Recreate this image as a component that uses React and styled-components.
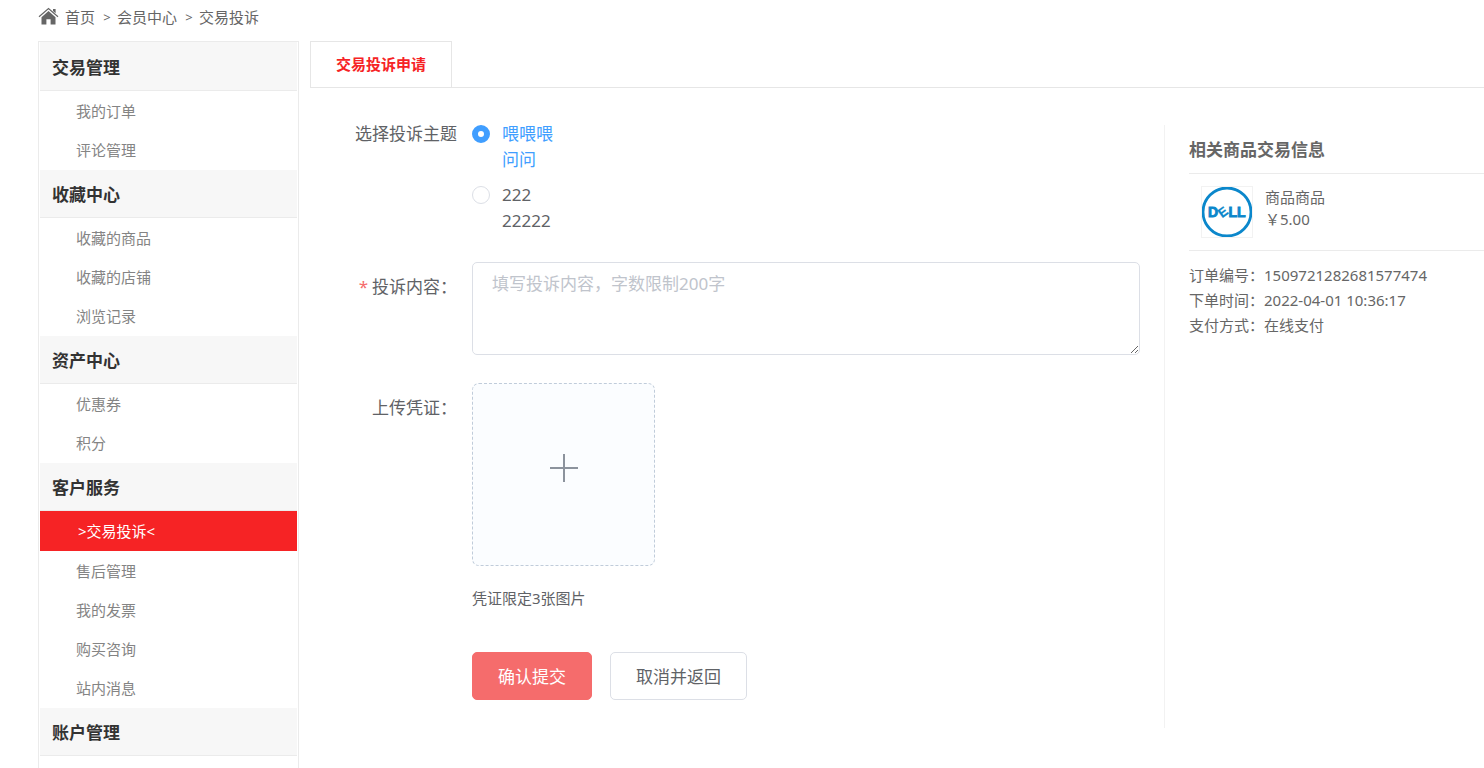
import React, { useState } from "react";
import styled, { createGlobalStyle } from "styled-components";

const GlobalStyle = createGlobalStyle`
  * {
    box-sizing: border-box;
  }

  body {
    margin: 0;
    background: white;
    color: #606266;
    font-family: "Noto Sans", "Noto Sans CJK SC", sans-serif;
    font-size: 17px;
  }

  button,
  input,
  textarea {
    font-family: inherit;
    font-size: inherit;
  }

  a {
    color: inherit;
    text-decoration: none;
  }
`;

const Page = styled.div`
  display: flex;
  flex-direction: column;
  min-height: 100vh;
  padding-left: 38px;
`;

const Breadcrumb = styled.nav`
  display: flex;
  align-items: center;
  height: 33px;
  margin-bottom: 8px;
  font-size: 15px;
  color: #666;
`;

const HomeIcon = styled.svg`
  width: 21px;
  height: 20px;
  margin-right: 6px;
`;

const Separator = styled.span`
  width: 22px;
  padding-left: 2px;
  text-align: center;
  font-size: 13px;
`;

const Body = styled.div`
  display: flex;
  flex: 1;
  gap: 11px;
`;

const Sidebar = styled.aside`
  width: 261px;
  flex-shrink: 0;
  border: 1px solid #ebebeb;
  border-width: 1px 1px 0;
  padding: 0 1px;
`;

const GroupTitle = styled.h2`
  display: flex;
  align-items: center;
  height: ${(props) => (props.$first ? "49px" : "48px")};
  margin: 0;
  padding-left: 12px;
  border-bottom: 1px solid #ebebeb;
  background: #f7f7f7;
  color: #333;
  font-size: 17px;
`;

const Menu = styled.div`
  display: grid;
  padding-bottom: 1px;
`;

const MenuLink = styled.a`
  height: ${(props) => (props.$active ? "40px" : "39px")};
  line-height: 40px;
  padding-left: ${(props) => (props.$active ? "38px" : "36px")};
  background: ${(props) => (props.$active ? "#f62325" : "white")};
  color: ${(props) => (props.$active ? "white" : "#848484")};
  font-size: 15px;
`;

const Main = styled.main`
  flex: 1;
  min-width: 0;
`;

const Tabs = styled.div`
  display: flex;
  border-bottom: 1px solid #e6e6e6;
`;

const Tab = styled.button`
  height: 46px;
  padding: 0 25px 2px;
  border: 1px solid #e6e6e6;
  border-bottom: none;
  background: white;
  color: #f62325;
  font-size: 15px;
  font-weight: bold;
`;

const Content = styled.div`
  display: flex;
  padding-top: 37px;
`;

const Form = styled.form`
  display: grid;
  grid-template-columns: 147px 1fr;
  column-gap: 15px;
  row-gap: 28px;
  align-content: start;
  flex: 1;
  min-width: 0;
  height: 603px;
  padding-right: 24px;
`;

const Label = styled.label`
  text-align: right;
  line-height: 50px;
`;

const TopicLabel = styled.div`
  text-align: right;
  line-height: 18px;
`;

const Required = styled.span`
  margin-right: 4px;
  color: #f56c6c;
`;

const Topics = styled.div`
  display: grid;
  justify-items: start;
  gap: 9px;
  margin-top: -4px;
`;

const Topic = styled.label`
  display: flex;
  gap: 12px;
  line-height: 26px;
  color: ${(props) => (props.$checked ? "#409eff" : "#606266")};
`;

const Radio = styled.input`
  appearance: none;
  width: 18px;
  height: 18px;
  margin: 4px 0;
  border: 1px solid #dcdfe6;
  border-radius: 50%;
  background: white;

  &:checked {
    border: 6px solid #409eff;
  }
`;

const Textarea = styled.textarea`
  display: block;
  width: 100%;
  height: 93px;
  padding: 8px 19px;
  border: 1px solid #dcdfe6;
  border-radius: 5px;
  line-height: 26px;
  resize: vertical;

  &::placeholder {
    color: #c0c4cc;
  }
`;

const Upload = styled.button`
  display: flex;
  align-items: center;
  justify-content: center;
  width: 183px;
  height: 183px;
  padding: 0 0 14px;
  border: 1px dashed #c0ccda;
  border-radius: 7px;
  background: #fbfdff;
  color: #8c939d;
`;

const Tip = styled.p`
  margin: 19px 0 41px;
  font-size: 15px;
  line-height: 26px;
`;

const Actions = styled.div`
  display: flex;
  gap: 18px;
`;

const Button = styled.button`
  height: 48px;
  padding: 0 25px 2px;
  border: 1px solid ${(props) => (props.$primary ? "#f56c6c" : "#dcdfe6")};
  border-radius: 5px;
  background: ${(props) => (props.$primary ? "#f56c6c" : "white")};
  color: ${(props) => (props.$primary ? "white" : "#606266")};
`;

const OrderInfo = styled.section`
  width: 320px;
  flex-shrink: 0;
  padding-left: 24px;
  border-left: 1px solid #f2f2f2;
  color: #666;
  font-size: 15px;
`;

const OrderTitle = styled.h3`
  margin: 0;
  padding: 12px 0 10px;
  border-bottom: 1px solid #ebebeb;
  font-size: 17px;
  line-height: 26px;
`;

const Product = styled.div`
  display: flex;
  gap: 12px;
  padding: 12px;
  border-bottom: 1px solid #ebebeb;
  line-height: 22px;
`;

const Logo = styled.svg`
  width: 52px;
  height: 52px;
  border: 1px solid #f2f2f2;
`;

const Details = styled.div`
  padding-top: 12px;
  line-height: 25px;
`;

const groups = [
  { title: "交易管理", items: ["我的订单", "评论管理"] },
  { title: "收藏中心", items: ["收藏的商品", "收藏的店铺", "浏览记录"] },
  { title: "资产中心", items: ["优惠券", "积分"] },
  {
    title: "客户服务",
    items: ["交易投诉", "售后管理", "我的发票", "购买咨询", "站内消息"],
  },
  { title: "账户管理", items: [] },
];

const topics = [
  { id: "1", name: "喂喂喂", remark: "问问" },
  { id: "2", name: "222", remark: "22222" },
];

function DellLogo() {
  return (
    <Logo viewBox="0 0 50 50" role="img" aria-label="DELL">
      <circle cx="25" cy="25" r="24" fill="none" stroke="#0b87cb" strokeWidth="2.8" />
      <g
        fill="#0b87cb"
        stroke="#0b87cb"
        strokeWidth="0.9"
        fontFamily="Liberation Sans, sans-serif"
        fontWeight="bold"
        fontSize="14"
      >
        <text x="6" y="30">D</text>
        <text x="16.5" y="29.5" fontSize="13" strokeWidth="0.3" transform="rotate(-36 21 25)">E</text>
        <text x="26.5" y="30">L</text>
        <text x="35" y="30">L</text>
      </g>
    </Logo>
  );
}

function App() {
  const [topic, setTopic] = useState("1");

  return (
    <Page>
      <GlobalStyle />
      <Breadcrumb>
        <HomeIcon viewBox="0 0 21 20" fill="none">
          <path d="M1 9.7 10.5 1.5 20 9.7" stroke="#666" strokeWidth="1.2" />
          <path d="M15 2h2.6v4.2L15 4.1z" fill="#666" />
          <path d="M3.5 10.2 10.5 4.1 17.5 10.2v7.3h-4.9v-5.2H8.4v5.2H3.5z" fill="#666" />
        </HomeIcon>
        <a href="#home">首页</a>
        <Separator>&gt;</Separator>
        <a href="#member">会员中心</a>
        <Separator>&gt;</Separator>
        <span>交易投诉</span>
      </Breadcrumb>
      <Body>
        <Sidebar>
          {groups.map((group, index) => (
            <div key={group.title}>
              <GroupTitle $first={index === 0}>{group.title}</GroupTitle>
              <Menu>
                {group.items.map((item) => {
                  const active = item === "交易投诉";
                  return (
                    <MenuLink key={item} href="#menu" $active={active}>
                      {active ? `>${item}<` : item}
                    </MenuLink>
                  );
                })}
              </Menu>
            </div>
          ))}
        </Sidebar>
        <Main>
          <Tabs>
            <Tab type="button">交易投诉申请</Tab>
          </Tabs>
          <Content>
            <Form onSubmit={(e) => e.preventDefault()}>
              <TopicLabel id="topic-label">选择投诉主题</TopicLabel>
              <Topics role="radiogroup" aria-labelledby="topic-label">
                {topics.map((item) => (
                  <Topic key={item.id} $checked={topic === item.id}>
                    <Radio
                      type="radio"
                      name="topic"
                      checked={topic === item.id}
                      onChange={() => setTopic(item.id)}
                    />
                    <span>
                      {item.name}
                      <br />
                      {item.remark}
                    </span>
                  </Topic>
                ))}
              </Topics>

              <Label htmlFor="content">
                <Required>*</Required>投诉内容：
              </Label>
              <Textarea id="content" placeholder="填写投诉内容，字数限制200字" />

              <Label htmlFor="upload">上传凭证：</Label>
              <div>
                <Upload id="upload" type="button">
                  <svg width="30" height="30" viewBox="0 0 30 30" stroke="currentColor" strokeWidth="2">
                    <path d="M15 1v28M1 15h28" />
                  </svg>
                </Upload>
                <Tip>凭证限定3张图片</Tip>
                <Actions>
                  <Button type="submit" $primary>
                    确认提交
                  </Button>
                  <Button type="button">取消并返回</Button>
                </Actions>
              </div>
            </Form>
            <OrderInfo>
              <OrderTitle>相关商品交易信息</OrderTitle>
              <Product>
                <DellLogo />
                <div>
                  <div>商品商品</div>
                  <div>￥5.00</div>
                </div>
              </Product>
              <Details>
                <div>订单编号：1509721282681577474</div>
                <div>下单时间：2022-04-01 10:36:17</div>
                <div>支付方式：在线支付</div>
              </Details>
            </OrderInfo>
          </Content>
        </Main>
      </Body>
    </Page>
  );
}

export default App;
